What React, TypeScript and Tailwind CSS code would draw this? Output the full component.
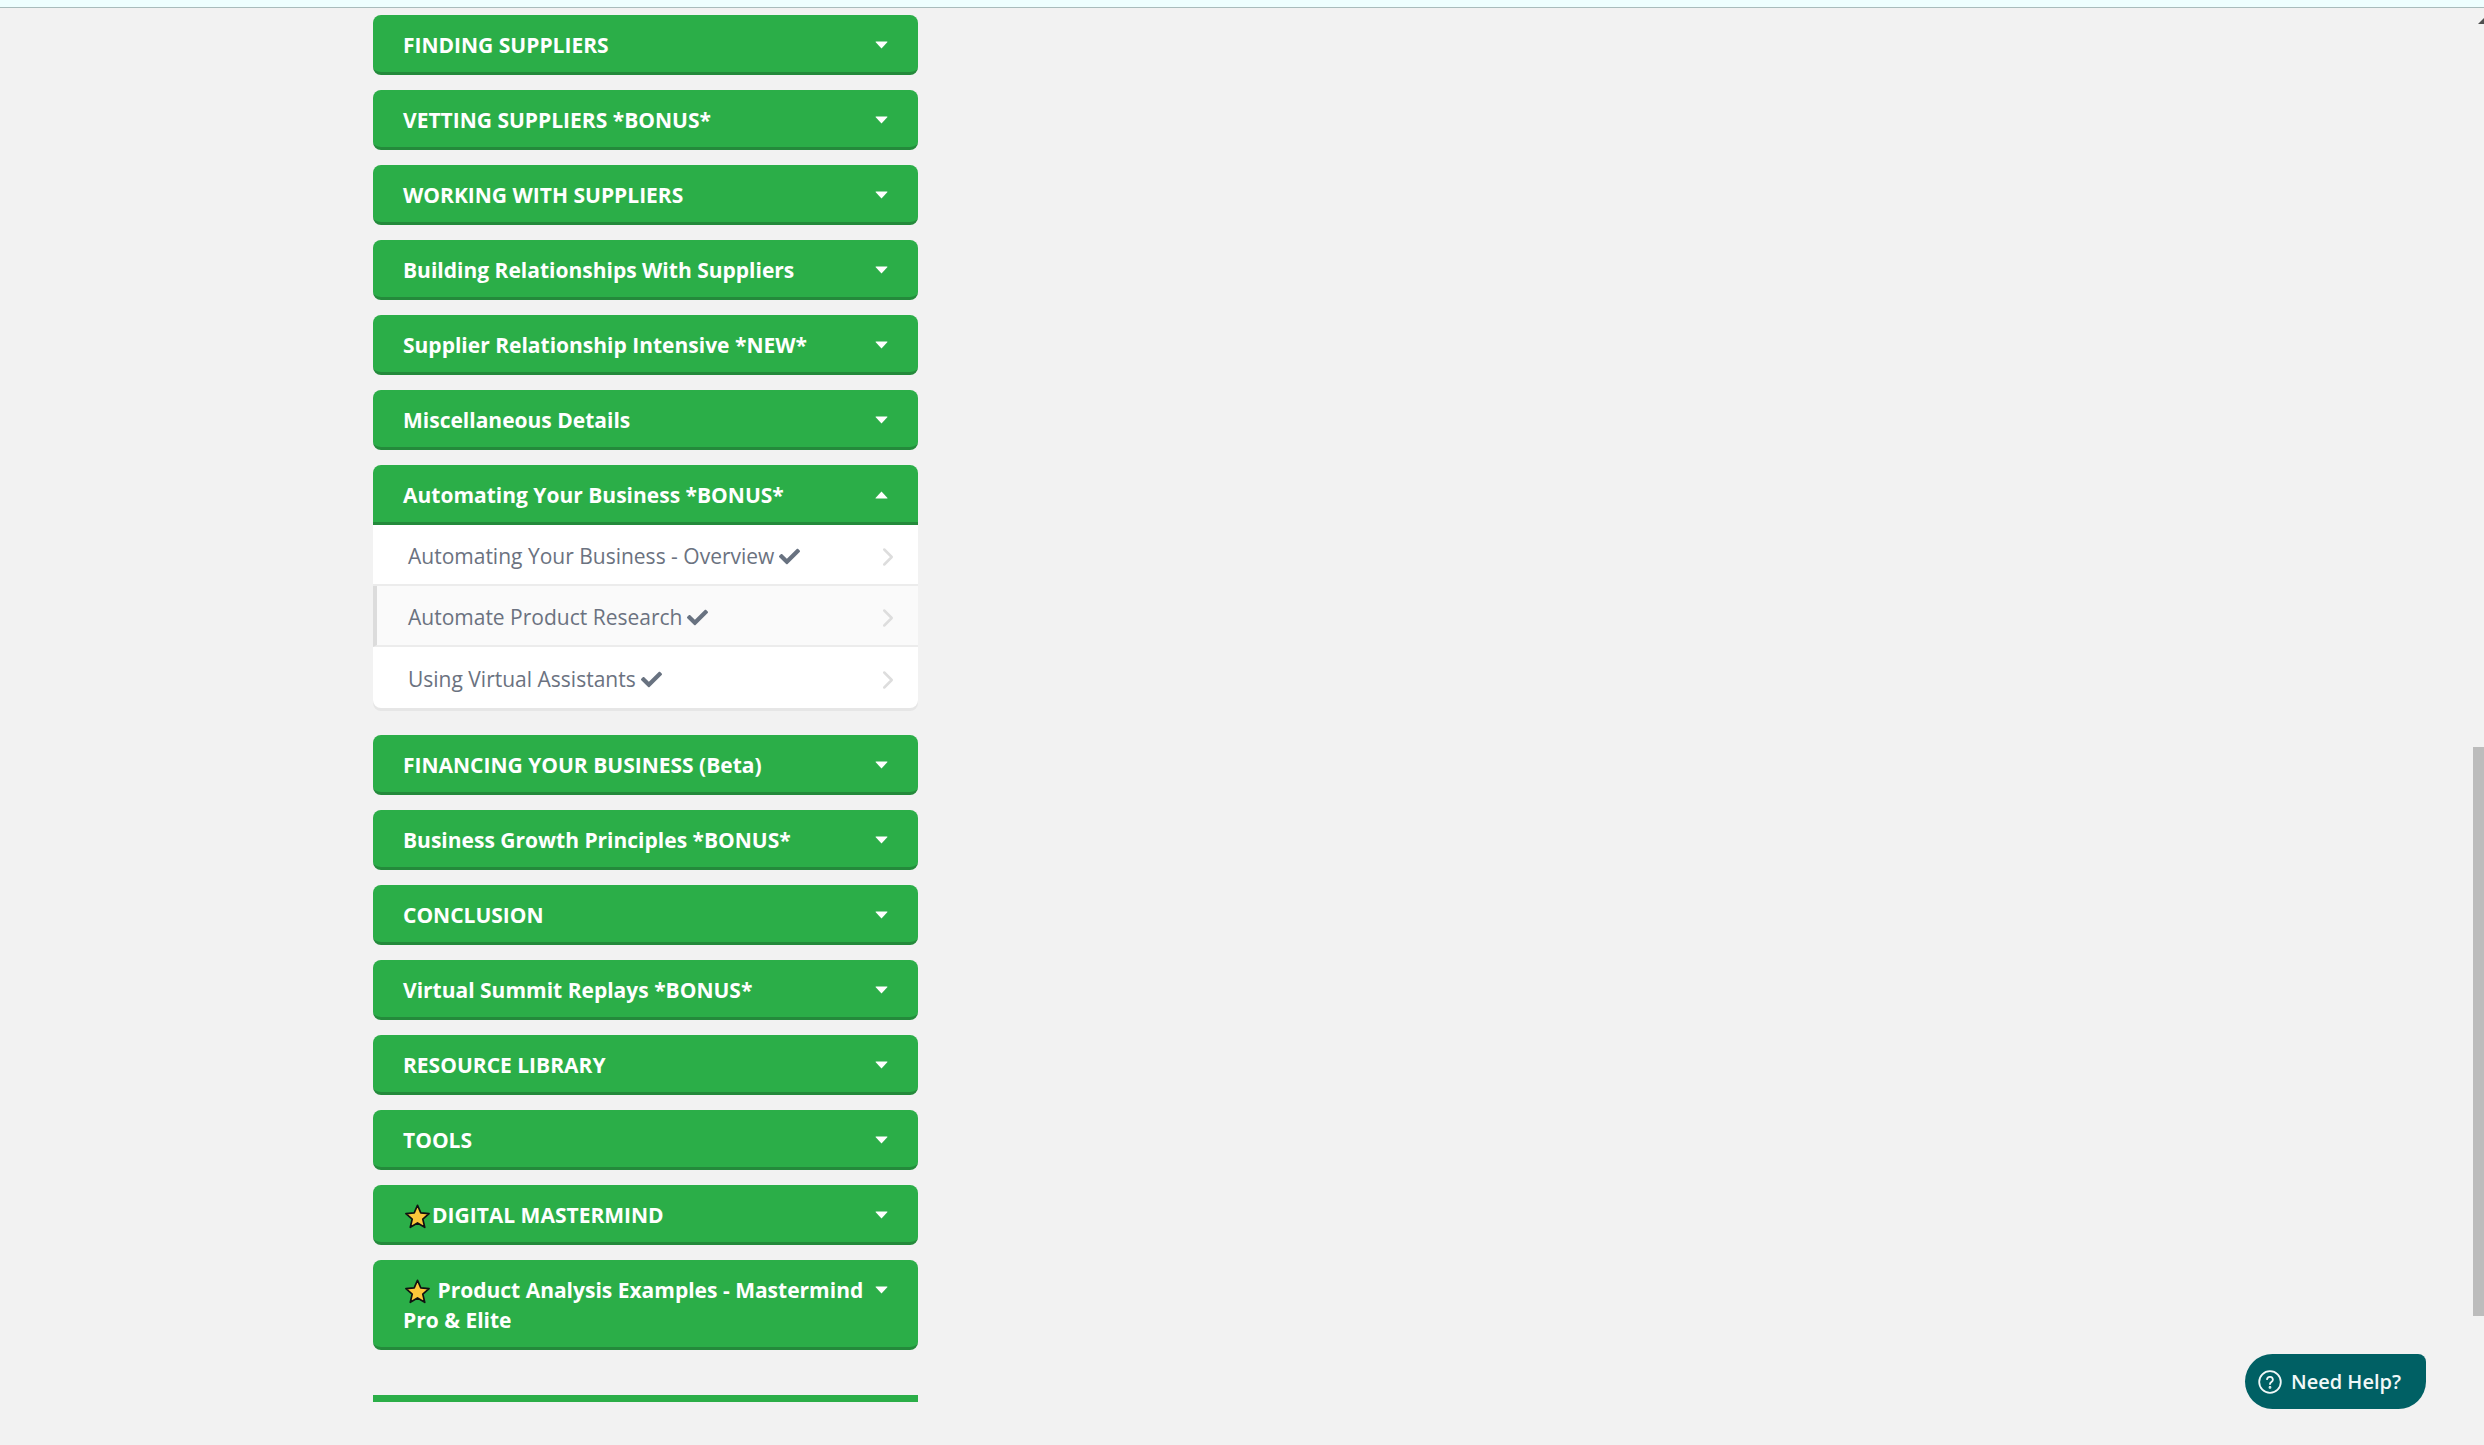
import { FaCheck } from "react-icons/fa";
import { FiChevronRight } from "react-icons/fi";

const before = [
  "FINDING SUPPLIERS",
  "VETTING SUPPLIERS *BONUS*",
  "WORKING WITH SUPPLIERS",
  "Building Relationships With Suppliers",
  "Supplier Relationship Intensive *NEW*",
  "Miscellaneous Details",
];

const after = [
  "FINANCING YOUR BUSINESS (Beta)",
  "Business Growth Principles *BONUS*",
  "CONCLUSION",
  "Virtual Summit Replays *BONUS*",
  "RESOURCE LIBRARY",
  "TOOLS",
];

const lessons = [
  { title: "Automating Your Business - Overview", active: false },
  { title: "Automate Product Research", active: true },
  { title: "Using Virtual Assistants", active: false },
];

function Caret({ up }: { up?: boolean }) {
  return (
    <svg width="13" height="8" viewBox="0 0 13 8" className="shrink-0 mt-[11px]">
      <path d={up ? "M6.5 0.5 L12.5 7 Q12.5 7.5 12 7.5 L1 7.5 Q0.5 7.5 0.5 7 Z" : "M6.5 7.5 L12.5 1 Q12.5 0.5 12 0.5 L1 0.5 Q0.5 0.5 0.5 1 Z"} fill="#fff" />
    </svg>
  );
}

function Star() {
  return (
    <svg width="25" height="25" viewBox="0.2 0.6 23.6 23" className="ml-[2px] mr-[2px] inline-block align-[-6px]">
      <path
        d="M12 1.5 L15.1 8.7 L22.9 9.4 L17 14.6 L18.8 22.3 L12 18.2 L5.2 22.3 L7 14.6 L1.1 9.4 L8.9 8.7 Z"
        fill="#fdc73a"
        stroke="#111"
        strokeWidth="1.6"
        strokeLinejoin="round"
      />
    </svg>
  );
}

function SectionButton({ children, up, flat }: { children: React.ReactNode; up?: boolean; flat?: boolean }) {
  return (
    <div
      className={`flex items-start justify-between bg-[#2bae48] border-b-[3px] border-[#248a3b] pl-[30px] pr-[30px] pt-[15px] pb-[12px] text-[21px] leading-[30px] font-bold text-white ${
        flat ? "rounded-t-[8px]" : "rounded-[8px]"
      }`}
    >
      <div className="max-w-[470px]">{children}</div>
      <Caret up={up} />
    </div>
  );
}

export default function App() {
  return (
    <div className="relative h-[1445px] overflow-hidden bg-[#f2f2f2] font-['Open_Sans','Noto_Sans',sans-serif]">
      <div className="h-[8px] bg-[#eeffff] border-b border-[#a9bcbc]" />

      <div className="ml-[373px] mt-[7px] w-[545px]">
        <div className="flex flex-col gap-[15px]">
          {before.map((t) => (
            <SectionButton key={t}>{t}</SectionButton>
          ))}

          <div className="mb-[12px] rounded-[8px] bg-white shadow-[0_3px_0_#e6e6e6]">
            <SectionButton up flat>
              Automating Your Business *BONUS*
            </SectionButton>
            {lessons.map((l, i) => (
              <div
                key={l.title}
                className={`flex h-[61px] items-center justify-between pt-[4px] pr-[15px] text-[21px] text-[#6b7280] ${
                  i < 2 ? "border-b-2 border-[#ececec]" : ""
                } ${l.active ? "bg-[#fafafa] border-l-4 border-l-[#dcdcdc] pl-[31px]" : "pl-[35px]"}`}
              >
                <span className="flex items-center gap-[5px]">
                  {l.title}
                  <FaCheck className="text-[21px] text-[#687280]" />
                </span>
                <FiChevronRight className="text-[30px] text-[#dddddd]" />
              </div>
            ))}
          </div>

          {after.map((t) => (
            <SectionButton key={t}>{t}</SectionButton>
          ))}

          <SectionButton>
            <Star />
            DIGITAL MASTERMIND
          </SectionButton>
          <SectionButton>
            <Star /> Product Analysis Examples - Mastermind Pro &amp; Elite
          </SectionButton>
        </div>

        <div className="mt-[45px] h-[7px] bg-[#2bae48]" />
      </div>

      {/* scrollbar */}
      <div className="absolute right-0 top-[747px] h-[569px] w-[11px] bg-[#bcbcbc]" />
      <div className="absolute right-0 top-[18px] h-0 w-0 border-b-[6px] border-l-[6px] border-b-[#505050] border-l-transparent" />

      {/* help button */}
      <div className="absolute left-[2245px] top-[1354px] flex h-[55px] w-[181px] items-center gap-[9px] rounded-[28px] rounded-tr-[8px] bg-[#006064] pl-[13px] text-[20px] font-semibold text-[#f1f8f8]">
        <svg width="24" height="24" viewBox="0 0 24 24" fill="none" stroke="currentColor" strokeWidth="1.8" strokeLinecap="round">
          <circle cx="12" cy="12" r="10.8" />
          <path d="M9 9.2a3 3 0 0 1 5.9.6c0 2-2.9 2.4-2.9 4.2" />
          <circle cx="12" cy="17.4" r="0.5" fill="currentColor" />
        </svg>
        Need Help?
      </div>
    </div>
  );
}
